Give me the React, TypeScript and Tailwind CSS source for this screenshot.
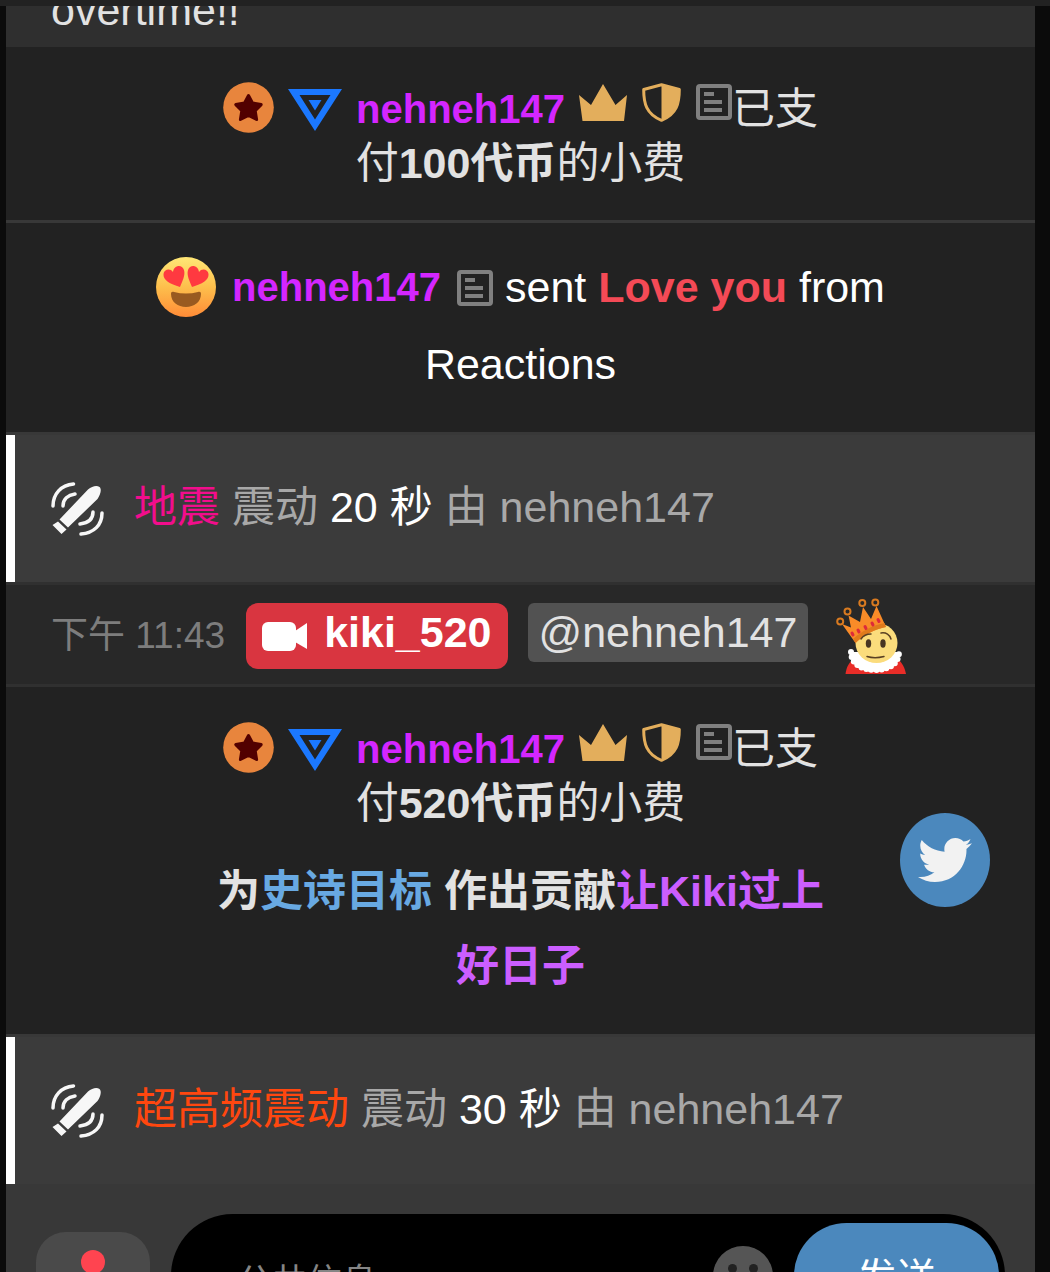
import type { ReactNode } from "react";
import { FaTwitter } from "react-icons/fa";

function StarBadge() {
  return (
    <svg className="mb-1 size-[51px] shrink-0" viewBox="0 0 51 51" aria-hidden="true">
      <circle cx="25.5" cy="25.5" r="25.3" fill="#e8853d" />
      <path
        d="M25.5 13.5l4 7.5 8.700 1.600-6 6.200 1.400 8.700-8.100-4-8.100 4 1.400-8.700-6-6.200 8.700-1.600z"
        fill="#520000"
        stroke="#520000"
        strokeWidth="3"
        strokeLinejoin="round"
      />
    </svg>
  );
}

function TriangleBadge() {
  return (
    <svg className="mt-0.5 h-[42px] w-[54px] shrink-0" viewBox="0 0 54 42" aria-hidden="true">
      <path
        d="M0 0h54L27 42zM11.5 6L27 30.5 42.5 6z"
        fill="#1b78ff"
        fillRule="evenodd"
      />
      <path d="M20.5 11h13L27 21.500z" fill="#1b78ff" />
    </svg>
  );
}

function Crown() {
  return (
    <svg className="h-[37px] w-12 shrink-0" viewBox="0 0 48 37" aria-hidden="true">
      <path d="M0 11l12 10L24 0l12.500 21L48 11l-3 26H3.500z" fill="#e3ae5c" />
    </svg>
  );
}

function Shield() {
  return (
    <svg className="h-[39px] w-[39px] shrink-0" viewBox="0 0 39 39" aria-hidden="true">
      <path
        d="M19.500 1.800L37.300 6.500C37.300 20 35 31 19.500 37.300 4 31 1.700 20 1.700 6.500z"
        fill="none"
        stroke="#e3ae5c"
        strokeWidth="3"
        strokeLinejoin="round"
      />
      <path d="M19.500 1.800L37.300 6.500C37.300 20 35 31 19.500 37.300z" fill="#e3ae5c" />
    </svg>
  );
}

function NoteButton() {
  return (
    <button type="button" aria-label="Add note" className="shrink-0">
      <svg className="size-9" viewBox="0 0 36 36" aria-hidden="true">
        <rect x="2" y="2" width="32" height="32" rx="2" fill="none" stroke="#808080" strokeWidth="4" />
        <path d="M8 10h10M8 18h18M8 26h18" stroke="#808080" strokeWidth="4" />
      </svg>
    </button>
  );
}

function HeartEyes() {
  return (
    <svg className="mb-0.5 size-[60px] shrink-0" viewBox="0 0 60 60" role="img" aria-label="Heart eyes">
      <defs>
        <linearGradient id="face" x1="0" y1="0" x2="0" y2="1">
          <stop offset="0" stopColor="#ffe776" />
          <stop offset="0.5" stopColor="#fdbf4c" />
          <stop offset="1" stopColor="#ff8b37" />
        </linearGradient>
      </defs>
      <circle cx="30" cy="30" r="30" fill="url(#face)" />
      <path
        d="M24 30C14 27 7 23 7.500 17c.5-5 7-6 9.500-2 1-7 9-8 11-2 1.500 5-1.500 11-4 17z"
        fill="#ff3940"
      />
      <path
        d="M36 30c10-3 17-7 16.500-13-.5-5-7-6-9.500-2-1-7-9-8-11-2-1.500 5 1.500 11 4 17z"
        fill="#ff3940"
      />
      <path d="M15 37c0-2 1-2.500 3-2 8 2 16 2 24 0 2-.5 3 0 3 2 0 8-7 13-15 13s-15-5-15-13z" fill="#995a20" />
    </svg>
  );
}

function KingEmoji() {
  return (
    <svg className="h-[77px] w-[72px] shrink-0" viewBox="0 0 72 77" role="img" aria-label="King">
      <path d="M9.500 76c1-7 3-11 8-15h44c5 4 7 8 8.500 15z" fill="#e92d28" />
      <path d="M14 54c1 12 10 19 25 19s24-7 25-19z" fill="#fff" />
      <path
        d="M15 54c0 11 9 18 24 18s24-7 24-18"
        fill="none"
        stroke="#fff"
        strokeWidth="6"
        strokeDasharray="0 5"
        strokeLinecap="round"
      />
      <ellipse cx="40.500" cy="45" rx="21" ry="20" fill="#fbdc7c" />
      <path
        d="M19.500 45L6 26l9 3.500-2.500-12L24 24l3-15 8 12 5.500-13L50 29c-11 2-22 8-30.500 16z"
        fill="#f98b28"
      />
      <path d="M17 41c9-8 20-14 31.500-16l1.500 4c-11 2-22 8-30.500 16z" fill="#e07a1c" />
      <g fill="none" stroke="#d97a20" strokeWidth="2">
        <circle cx="4.200" cy="23.500" r="3" />
        <circle cx="11.500" cy="13.500" r="3" />
        <circle cx="26.300" cy="5" r="3" />
        <circle cx="39.300" cy="4.500" r="3" />
      </g>
      <path
        d="M16 35l1 2M22 32l1 2M29 28.500l1 2M36 25l1 2M42 21.500l1 2"
        stroke="#dd2a3a"
        strokeWidth="3"
        strokeLinecap="round"
      />
      <ellipse cx="32.500" cy="45.500" rx="2.700" ry="4.200" fill="#483522" />
      <ellipse cx="47" cy="45.500" rx="2.700" ry="4.200" fill="#483522" />
      <path
        d="M25 41c2-3 6-5 10-5M45 35c5-1 9 2 10 6M31 58.500c5 1.500 11 1.500 17 0"
        fill="none"
        stroke="#5a4023"
        strokeWidth="1.500"
        strokeLinecap="round"
      />
    </svg>
  );
}

function ToyIcon() {
  return (
    <svg className="h-[54px] w-[53px] shrink-0" viewBox="0 0 53 54" aria-hidden="true">
      <path
        d="M8.500 37.500L37 7.500C41 4 46 3 48.500 5s1 8-2 12L17 45.500zM7 39.500l8.500 8L10.500 52 1.500 43z"
        fill="#f7f7f7"
      />
      <g fill="none" stroke="#f7f7f7" strokeWidth="3.500" strokeLinecap="round">
        <path d="M2 24C2 12 10 3 22.500 2M12 24c0-7 5-11 12-12M51 31c0 12-8 20-21 21M42 30c0 7-5 11-13 12" />
      </g>
    </svg>
  );
}

function CameraIcon() {
  return (
    <svg className="h-[29px] w-[46px] shrink-0" viewBox="0 0 46 29" aria-hidden="true">
      <rect width="34" height="29" rx="6" fill="#fff" />
      <path d="M33 9L45 1v26L33 20z" fill="#fff" />
    </svg>
  );
}

function Username() {
  return (
    <a href="#nehneh147" className="text-[40px] font-bold text-[#d426ff]">
      nehneh147
    </a>
  );
}

function TipNotice({ amount, children }: { amount: number; children?: ReactNode }) {
  return (
    <div className="border-b-[3px] border-[#383838] px-6 pb-[30px] pt-[35px] text-center">
      <p className="mx-auto max-w-[622px]">
        <span className="inline-flex h-[54px] items-center gap-[14px] align-top">
          <StarBadge />
          <TriangleBadge />
          <Username />
          <span className="flex items-center gap-[15px] pb-3.5">
            <Crown />
            <Shield />
            <NoteButton />
          </span>
        </span>
        已支付<b>{amount}代币</b>的小费
      </p>
      {children}
    </div>
  );
}

type VibrationProps = { name: string; nameClass: string; seconds: number };

function VibrationNotice({ name, nameClass, seconds }: VibrationProps) {
  return (
    <div className="flex h-[147px] items-center gap-[30px] border-l-[9px] border-white bg-[#3b3b3b] pl-9 text-[#a8a8a8]">
      <ToyIcon />
      <p className="pb-1">
        <span className={nameClass}>{name}</span> 震动{" "}
        <span className="text-white">{seconds} 秒</span> 由 nehneh147
      </p>
    </div>
  );
}

function Composer() {
  return (
    <form className="flex items-center gap-[21px] bg-[#383838] p-[30px]">
      <button
        type="button"
        aria-label="Menu"
        className="flex h-[88px] w-[114px] shrink-0 justify-center rounded-[30px] bg-[#4a4a4a] pt-[18px]"
      >
        <span className="size-6 rounded-full bg-[#ff4450]" />
      </button>
      <div className="flex h-[123px] min-w-0 flex-1 items-center rounded-full bg-black p-[9px] pr-1.5">
        <input
          type="text"
          aria-label="公共信息"
          placeholder="公共信息"
          className="h-full min-w-0 flex-1 bg-transparent pl-[57px] pt-3 text-[35px] text-white outline-none placeholder:text-[#858585]"
        />
        <button type="button" aria-label="Emoji" className="mr-[21px] shrink-0">
          <svg className="size-[60px]" viewBox="0 0 60 60" aria-hidden="true">
            <circle cx="30" cy="30" r="30" fill="#555" />
            <circle cx="19.500" cy="22.500" r="4.500" fill="#222" />
            <circle cx="40.500" cy="22.500" r="4.500" fill="#222" />
            <path d="M17 38c6 9 20 9 26 0" fill="none" stroke="#222" strokeWidth="4" />
          </svg>
        </button>
        <button
          type="submit"
          className="h-[105px] w-[205px] shrink-0 rounded-full bg-[#4b88bd] pt-1 text-[40px] text-white"
        >
          发送
        </button>
      </div>
    </form>
  );
}

export default function App() {
  return (
    <div className="h-screen overflow-hidden bg-[#0b0b0b] font-['Liberation_Sans','Noto_Sans_CJK_SC',sans-serif] text-[43px] leading-[54px] text-[#e2e2e2]">
      <div className="h-1.5 bg-[#222]" />
      <main className="ml-1.5 mr-[15px] bg-[#222]">
        <div className="flex h-[41px] items-end overflow-hidden bg-[#2f2f2f] px-[45px] pb-2.5">
          <p>overtime!!</p>
        </div>

        <TipNotice amount={100} />

        <div className="border-b-[3px] border-[#383838] px-6 pb-[29px] pt-[26px] text-center leading-[77px] text-white">
          <p className="mx-auto max-w-[760px]">
            <span className="inline-flex h-[77px] items-center gap-4 align-top">
              <HeartEyes />
              <Username />
              <NoteButton />
            </span>{" "}
            sent <b className="text-[#f44a56]">Love you</b> from Reactions
          </p>
        </div>

        <VibrationNotice name="地震" nameClass="text-[#f20d8c]" seconds={20} />

        <div className="flex h-[105px] items-start border-y-[3px] border-[#303030] bg-[#282828] px-[45px]">
          <time className="mt-6 text-[37px] text-[#7d7d7d]">下午 11:43</time>
          <a
            href="#kiki_520"
            className="ml-[21px] mt-[18px] flex h-[66px] items-center gap-4 rounded-xl bg-[#d93540] px-4 font-bold text-white"
          >
            <CameraIcon />
            <span className="pb-2">kiki_520</span>
          </a>
          <a
            href="#nehneh147"
            className="ml-5 mt-[18px] h-[59px] rounded-md bg-[#525252] px-[11px] pt-0.5"
          >
            @nehneh147
          </a>
          <span className="ml-7 mt-[13px]">
            <KingEmoji />
          </span>
        </div>

        <div className="relative">
          <TipNotice amount={520}>
            <p className="mx-auto mt-6 max-w-[622px] font-bold leading-[75px]">
              为<a href="#goal" className="text-[#68a9e2]">史诗目标</a> 作出贡献
              <span className="text-[#cb5eff]">让Kiki过上好日子</span>
            </p>
          </TipNotice>
          <a
            href="#twitter"
            aria-label="Twitter"
            className="absolute right-[45px] top-[126px] flex h-[94px] w-[90px] items-center justify-center rounded-[50%] bg-[#4b88bd]"
          >
            <FaTwitter className="size-[54px] text-[#f2f2f2]" />
          </a>
        </div>

        <VibrationNotice name="超高频震动" nameClass="text-[#ff470f]" seconds={30} />

        <Composer />
      </main>
    </div>
  );
}
